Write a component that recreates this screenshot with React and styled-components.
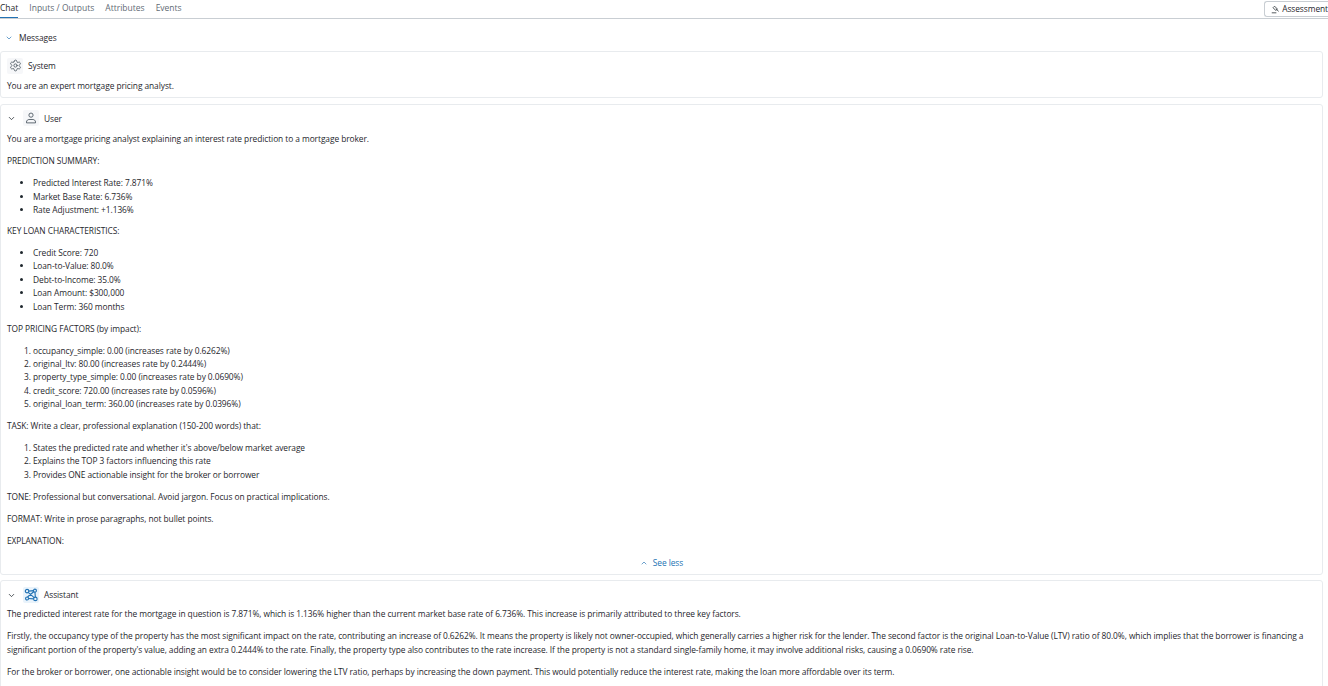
import React from 'react';
import styled, { createGlobalStyle } from 'styled-components';
import { ChevronDown, ChevronUp, Settings } from 'lucide-react';

const GlobalStyle = createGlobalStyle`
  html, body {
    margin: 0;
    height: 686px;
    overflow: hidden;
    background: #fff;
    font-family: "Open Sans", "Liberation Sans", sans-serif;
    font-size: 8.4px;
    letter-spacing: -0.07px;
    line-height: 13.4px;
    color: #1f272d;
  }
`;

const Page = styled.div`
  width: 1328px;
  height: 686px;
  overflow: hidden;
`;

const TabBar = styled.div`
  display: flex;
  align-items: stretch;
  justify-content: space-between;
  height: 18px;
  border-bottom: 1px solid #c9ced3;
`;

const Tabs = styled.div`
  display: flex;
  gap: 11px;
`;

const Tab = styled.div`
  height: 18px;
  line-height: 16px;
  font-size: 8.5px;
  letter-spacing: 0;
  color: ${({ $active }) => ($active ? '#1f272d' : '#5f6b75')};
  border-bottom: ${({ $active }) => ($active ? '1px solid #2272b4' : 'none')};
  box-sizing: border-box;
`;

const AssessmentButton = styled.div`
  display: flex;
  align-items: center;
  gap: 3px;
  height: 16px;
  margin-top: 1px;
  padding-left: 6px;
  width: 64px;
  box-sizing: border-box;
  border: 1px solid #c9ced3;
  border-right: none;
  border-radius: 3px 0 0 3px;
  white-space: nowrap;
  overflow: hidden;
`;

const Section = styled.div`
  display: flex;
  align-items: center;
  gap: 6px;
  height: 13px;
  margin: 12px 0 7px 5px;
  color: #2272b4;
`;

const SectionTitle = styled.span`
  color: #1f272d;
`;

const Card = styled.div`
  margin: 0 5px 5.5px 0;
  padding: 5.6px 6px ${({ $tail = 5 }) => $tail}px;
  border: 1px solid #e8ebee;
  border-radius: 3px;
`;

const CardHead = styled.div`
  display: flex;
  align-items: center;
  height: 16px;
  margin-bottom: ${({ $gap = 5.4 }) => $gap}px;
`;

const Toggle = styled.span`
  display: flex;
  width: 16px;
  color: #1f272d;
`;

const Avatar = styled.span`
  display: flex;
  align-items: center;
  justify-content: center;
  width: 16px;
  height: 16px;
  margin-right: 5px;
  border-radius: 2px;
  background: ${({ $assistant }) => ($assistant ? '#e9f3fb' : '#f6f7f9')};
  color: ${({ $assistant }) => ($assistant ? '#2272b4' : '#4f5a64')};
`;

const Para = styled.p`
  margin: 0 0 8.6px;
  &:last-child { margin-bottom: 0; }
`;

const Bullets = styled.ul`
  margin: 0 0 ${({ $after = 8 }) => $after}px;
  padding-left: 26px;
`;

const Numbers = styled.ol`
  margin: 0 0 ${({ $after = 8 }) => $after}px;
  padding-left: 26px;
`;

const SeeLess = styled.div`
  display: flex;
  align-items: center;
  justify-content: center;
  gap: 5px;
  height: 12px;
  margin-top: 9.5px;
  color: #2272b4;
`;

const UserIcon = () => (
  <svg width="12" height="12" viewBox="0 0 16 16" fill="none" stroke="currentColor" strokeWidth="1.2">
    <circle cx="8" cy="4.2" r="2.8" />
    <path d="M2 14.5h12v-1.2c0-2-1.8-3.3-3.4-3.3H5.4C3.8 10 2 11.3 2 13.3z" strokeLinejoin="round" />
  </svg>
);

const NodesIcon = () => (
  <svg width="14" height="14" viewBox="0 0 16 16" fill="none" stroke="currentColor" strokeWidth="1.3">
    <circle cx="3.5" cy="3.5" r="2" />
    <circle cx="12.5" cy="3" r="1.7" />
    <circle cx="13" cy="12.5" r="2" />
    <circle cx="3.5" cy="12" r="1.7" />
    <path d="M5.5 3.5 10.8 3M4.8 5 11.6 11M12.5 4.7 13 10.5M5.2 12l5.8.5M4 10.3 11.4 4" />
  </svg>
);

const GavelIcon = () => (
  <svg width="11" height="11" viewBox="0 0 16 16" fill="none" stroke="currentColor" strokeWidth="1.5" strokeLinejoin="round">
    <path d="M7 1.5 12.5 7 9.5 10 4 4.5z" />
    <path d="M10 6.5l5 5.5" />
    <path d="M1.5 14.5h9" />
  </svg>
);

const loan = ['Credit Score: 720', 'Loan-to-Value: 80.0%', 'Debt-to-Income: 35.0%', 'Loan Amount: $300,000', 'Loan Term: 360 months'];
const factors = [
  'occupancy_simple: 0.00 (increases rate by 0.6262%)',
  'original_ltv: 80.00 (increases rate by 0.2444%)',
  'property_type_simple: 0.00 (increases rate by 0.0690%)',
  'credit_score: 720.00 (increases rate by 0.0596%)',
  'original_loan_term: 360.00 (increases rate by 0.0396%)',
];

export default function App() {
  return (
    <Page>
      <GlobalStyle />
      <TabBar>
        <Tabs>
          <Tab $active>Chat</Tab>
          <Tab>Inputs / Outputs</Tab>
          <Tab>Attributes</Tab>
          <Tab>Events</Tab>
        </Tabs>
        <AssessmentButton><GavelIcon />Assessment</AssessmentButton>
      </TabBar>
      <Section><ChevronDown size={8} /><SectionTitle>Messages</SectionTitle></Section>
      <Card>
        <CardHead><Avatar><Settings size={13} strokeWidth={1.6} /></Avatar>System</CardHead>
        <Para>You are an expert mortgage pricing analyst.</Para>
      </Card>
      <Card>
        <CardHead $gap={5.7}><Toggle><ChevronDown size={9} /></Toggle><Avatar><UserIcon /></Avatar>User</CardHead>
        <Para>You are a mortgage pricing analyst explaining an interest rate prediction to a mortgage broker.</Para>
        <Para>PREDICTION SUMMARY:</Para>
        <Bullets $after={7.6}>
          <li>Predicted Interest Rate: 7.871%</li>
          <li>Market Base Rate: 6.736%</li>
          <li>Rate Adjustment: +1.136%</li>
        </Bullets>
        <Para>KEY LOAN CHARACTERISTICS:</Para>
        <Bullets $after={8.6}>{loan.map(t => <li key={t}>{t}</li>)}</Bullets>
        <Para>TOP PRICING FACTORS (by impact):</Para>
        <Numbers $after={8.2}>{factors.map(t => <li key={t}>{t}</li>)}</Numbers>
        <Para>TASK: Write a clear, professional explanation (150-200 words) that:</Para>
        <Numbers $after={9}>
          <li>States the predicted rate and whether it's above/below market average</li>
          <li>Explains the TOP 3 factors influencing this rate</li>
          <li>Provides ONE actionable insight for the broker or borrower</li>
        </Numbers>
        <Para>TONE: Professional but conversational. Avoid jargon. Focus on practical implications.</Para>
        <Para>FORMAT: Write in prose paragraphs, not bullet points.</Para>
        <Para>EXPLANATION:</Para>
        <SeeLess><ChevronUp size={8} />See less</SeeLess>
      </Card>
      <Card $tail={40}>
        <CardHead $gap={4.1}><Toggle><ChevronDown size={9} /></Toggle><Avatar $assistant><NodesIcon /></Avatar>Assistant</CardHead>
        <Para>The predicted interest rate for the mortgage in question is 7.871%, which is 1.136% higher than the current market base rate of 6.736%. This increase is primarily attributed to three key factors.</Para>
        <Para>Firstly, the occupancy type of the property has the most significant impact on the rate, contributing an increase of 0.6262%. It means the property is likely not owner-occupied, which generally carries a higher risk for the lender. The second factor is the original Loan-to-Value (LTV) ratio of 80.0%, which implies that the borrower is financing a significant portion of the property's value, adding an extra 0.2444% to the rate. Finally, the property type also contributes to the rate increase. If the property is not a standard single-family home, it may involve additional risks, causing a 0.0690% rate rise.</Para>
        <Para>For the broker or borrower, one actionable insight would be to consider lowering the LTV ratio, perhaps by increasing the down payment. This would potentially reduce the interest rate, making the loan more affordable over its term.</Para>
      </Card>
    </Page>
  );
}
